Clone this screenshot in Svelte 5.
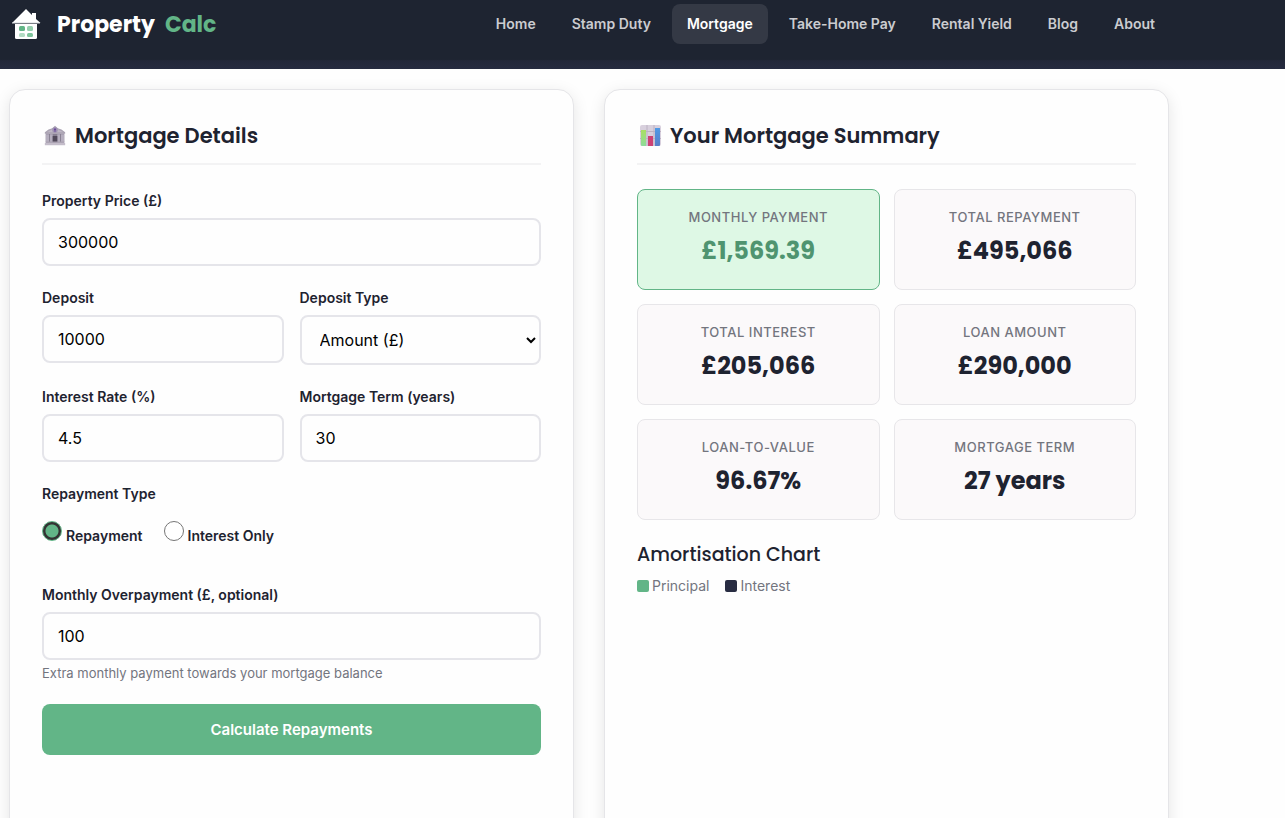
<script lang="ts">
  const links = ['Home', 'Stamp Duty', 'Mortgage', 'Take-Home Pay', 'Rental Yield', 'Blog', 'About'];
  const active = 'Mortgage';

  let price = $state('300000');
  let deposit = $state('10000');
  let depositType = $state('amount');
  let rate = $state('4.5');
  let term = $state('30');
  let repaymentType = $state('repayment');
  let overpayment = $state('100');

  const results = [
    { label: 'Monthly Payment', value: '£1,569.39', highlight: true },
    { label: 'Total Repayment', value: '£495,066' },
    { label: 'Total Interest', value: '£205,066' },
    { label: 'Loan Amount', value: '£290,000' },
    { label: 'Loan-to-Value', value: '96.67%' },
    { label: 'Mortgage Term', value: '27 years' },
  ];
</script>

<header class="header">
  <a class="logo" href="#home">
    <svg width="30" height="32" viewBox="0 0 30 32" aria-hidden="true">
      <path d="M1 15 L15 1 L21 7 V5 H25 V11 L29.500 15 Z" fill="#fff" />
      <path d="M4 16 H26 V29.500 Q26 31 24.500 31 H5.500 Q4 31 4 29.500 Z" fill="#fff" />
      <path d="M1 15 H29" stroke="#d5d8dc" stroke-width="1" />
      <rect x="8" y="18" width="6" height="5" rx="1.500" fill="#62b587" />
      <rect x="16" y="18" width="6" height="5" rx="1.500" fill="#95cfae" />
      <rect x="8" y="25" width="6" height="4" rx="1.500" fill="#b3dcc4" />
      <rect x="16" y="25" width="6" height="4" rx="1.500" fill="#7fc49c" />
    </svg>
    <span class="logo-text">Property</span>
    <span class="logo-text accent">Calc</span>
  </a>
  <nav class="nav">
    {#each links as link}
      <a href="#{link.toLowerCase().replace(' ', '-')}" class:active={link === active}>{link}</a>
    {/each}
  </nav>
</header>

<main class="page">
  <section class="card">
    <h2>
      <svg width="24" height="24" viewBox="-1 -1 26 26" aria-hidden="true">
        <path d="M1 8 L5 5 L9 3.500 L12 1 L15 3.500 L19 5 L23 8 V9.500 H1 Z" fill="#aaa3b2" />
        <path d="M3 8 L12 3 L21 8 Z" fill="#beb7c5" />
        <circle cx="12" cy="5.500" r="3" fill="#9e91b2" />
        <path d="M12 3.500 V7.500 M11 5 H13" stroke="#654099" stroke-width="1" />
        <rect x="2" y="9.500" width="20" height="9.500" fill="#877f91" />
        <path d="M2 10 H5.500 V19 H2 Z M6.500 10 H9.500 V19 H6.500 Z M14.500 10 H17.500 V19 H14.500 Z M18.500 10 H22 V19 H18.500 Z" fill="#b5aebe" />
        <rect x="9.500" y="12" width="5" height="7" fill="#51495a" />
        <rect x="2" y="18" width="20" height="1.500" fill="#aaa2b2" />
        <rect x="1" y="19.500" width="22" height="2.500" fill="#c4bdca" />
      </svg>
      Mortgage Details
    </h2>
    <form onsubmit={(e) => e.preventDefault()}>
      <div class="group">
        <label for="price">Property Price (£)</label>
        <input id="price" type="text" inputmode="numeric" bind:value={price} />
      </div>
      <div class="row">
        <div class="group">
          <label for="deposit">Deposit</label>
          <input id="deposit" type="text" inputmode="numeric" bind:value={deposit} />
        </div>
        <div class="group">
          <label for="depositType">Deposit Type</label>
          <select id="depositType" bind:value={depositType}>
            <option value="amount">Amount (£)</option>
            <option value="percent">Percentage (%)</option>
          </select>
        </div>
      </div>
      <div class="row">
        <div class="group">
          <label for="rate">Interest Rate (%)</label>
          <input id="rate" type="text" inputmode="decimal" bind:value={rate} />
        </div>
        <div class="group">
          <label for="term">Mortgage Term (years)</label>
          <input id="term" type="text" inputmode="numeric" bind:value={term} />
        </div>
      </div>
      <fieldset class="group">
        <legend>Repayment Type</legend>
        <div class="radios">
          <label class="radio">
            <input type="radio" name="repaymentType" value="repayment" bind:group={repaymentType} />
            <span>Repayment</span>
          </label>
          <label class="radio">
            <input type="radio" name="repaymentType" value="interest" bind:group={repaymentType} />
            <span>Interest Only</span>
          </label>
        </div>
      </fieldset>
      <div class="group">
        <label for="overpayment">Monthly Overpayment (£, optional)</label>
        <input id="overpayment" type="text" inputmode="numeric" bind:value={overpayment} />
        <small>Extra monthly payment towards your mortgage balance</small>
      </div>
      <button type="submit">Calculate Repayments</button>
    </form>
  </section>

  <section class="card">
    <h2>
      <svg width="24" height="24" viewBox="0 0 24 24" aria-hidden="true">
        <defs>
          <linearGradient id="bar-green" x2="0" y2="1"><stop stop-color="#a9df62" /><stop offset="1" stop-color="#8edb9c" /></linearGradient>
          <linearGradient id="bar-blue" x2="0" y2="1"><stop stop-color="#4f9ae6" /><stop offset="1" stop-color="#5a7ec8" /></linearGradient>
        </defs>
        <rect x="2" y="1" width="21" height="21" rx="2" fill="#d8d0dd" />
        <path d="M2 7.500 H23 M2 14.500 H23 M9 1 V22 M16 1 V22" stroke="#bcb2c3" stroke-width="1" />
        <path d="M3 6 H8 V22 H4 Q3 22 3 21 Z" fill="url(#bar-green)" />
        <rect x="10" y="12" width="5" height="10" fill="#cd4174" />
        <path d="M17 4 H22 V21 Q22 22 21 22 H17 Z" fill="url(#bar-blue)" />
      </svg>
      Your Mortgage Summary
    </h2>
    <div class="results">
      {#each results as r}
        <div class="result" class:highlight={r.highlight}>
          <div class="result-label">{r.label}</div>
          <div class="result-value">{r.value}</div>
        </div>
      {/each}
    </div>
    <h3>Amortisation Chart</h3>
    <div class="legend">
      <span><i class="principal"></i>Principal</span>
      <span><i class="interest"></i>Interest</span>
    </div>
    <div class="chart"></div>
  </section>
</main>

<style>
  :global(body) {
    background: #fefefe;
    color: #1e2330;
    font-family: Inter, "Liberation Sans", sans-serif;
  }
  .header {
    display: flex;
    justify-content: space-between;
    align-items: flex-start;
    padding: 4px 115px 25px 11px;
    background: linear-gradient(#1e2431 86%, #23283a 88%, #262b40);
  }
  .logo {
    display: flex;
    align-items: center;
    gap: 10px;
    height: 40px;
    text-decoration: none;
  }
  .logo svg { margin-right: 6px; }
  .logo-text {
    color: #fff;
    font-family: Poppins, Inter, sans-serif;
    font-size: 22px;
    font-weight: 700;
  }
  .logo-text.accent { color: #62b587; }
  .nav {
    display: flex;
    gap: 6px;
  }
  .nav a {
    padding: 0 15px;
    border-radius: 8px;
    color: #cbccd0;
    font-size: 14px;
    font-weight: 600;
    line-height: 40px;
    text-decoration: none;
    white-space: nowrap;
  }
  .nav a.active {
    background: #343945;
    color: #fff;
  }

  .page {
    display: grid;
    grid-template-columns: 1fr 1fr;
    gap: 30px;
    padding: 20px 116px 40px 9px;
  }
  .card {
    padding: 32px;
    border: 1px solid #e5e5e8;
    border-radius: 16px;
    background: #fefefe;
    box-shadow: 0 4px 16px rgba(0, 0, 0, 0.1);
  }
  h2, h3 {
    margin: 0;
    font-family: Poppins, Inter, sans-serif;
  }
  h2 {
    display: flex;
    align-items: center;
    gap: 8px;
    margin-bottom: 24px;
    padding-bottom: 13px;
    border-bottom: 2px solid #f3f3f4;
    font-size: 21px;
    font-weight: 600;
    line-height: 28px;
  }
  h2 svg { margin-left: 1px; }

  .group {
    margin: 0 0 20px;
    padding: 0;
    border: 0;
  }
  .row {
    display: grid;
    grid-template-columns: 1fr 1fr;
    gap: 16px;
  }
  label, legend {
    display: block;
    margin-bottom: 6px;
    padding: 0;
    font-size: 14px;
    font-weight: 600;
    line-height: 23px;
  }
  input[type='text'], select {
    display: block;
    box-sizing: border-box;
    width: 100%;
    height: 48px;
    padding: 0 14px;
    border: 2px solid #e5e5ea;
    border-radius: 8px;
    background: #fefefe;
    color: #000;
    font-family: inherit;
    font-size: 16px;
  }
  select {
    height: 50px;
    padding: 0 0 0 14px;
  }
  .radios {
    display: flex;
    gap: 21px;
    padding: 10px 0 16px;
  }
  .radio {
    display: flex;
    align-items: flex-start;
    gap: 4px;
    margin: 0;
  }
  .radio span { margin-top: 3px; }
  .radio input {
    appearance: none;
    width: 20px;
    height: 20px;
    margin: 0;
    border: 1px solid #767676;
    border-radius: 50%;
    background: #fff;
  }
  .radio input:checked {
    border-color: #62b587;
    background: radial-gradient(circle, #62b587 6px, #333 7px);
  }
  small {
    display: block;
    margin-top: 3px;
    color: #73757e;
    font-size: 13px;
    line-height: 21px;
  }
  button {
    display: block;
    width: 100%;
    height: 51px;
    border: 0;
    border-radius: 8px;
    background: #62b587;
    color: #fff;
    font-family: inherit;
    font-size: 15px;
    font-weight: 600;
    cursor: pointer;
  }

  .results {
    display: grid;
    grid-template-columns: 1fr 1fr;
    gap: 14px;
  }
  .result {
    padding: 16px;
    border: 1px solid #e7e6e9;
    border-radius: 8px;
    background: #fbf9fa;
    text-align: center;
  }
  .result-label {
    color: #73757e;
    font-size: 13px;
    font-weight: 500;
    letter-spacing: 0.04em;
    line-height: 23px;
    text-transform: uppercase;
  }
  .result-value {
    font-family: Poppins, Inter, sans-serif;
    font-size: 24px;
    font-weight: 700;
    line-height: 44px;
  }
  .highlight {
    border-color: #62b587;
    background: #def8e5;
  }
  .highlight .result-value { color: #4f9470; }

  h3 {
    margin-top: 22px;
    font-size: 19px;
    font-weight: 500;
    line-height: 26px;
  }
  .legend {
    display: flex;
    gap: 16px;
    margin-top: 7px;
    color: #73757e;
    font-size: 14px;
    line-height: 22px;
  }
  .legend span {
    display: flex;
    align-items: center;
    gap: 3px;
  }
  .legend i {
    width: 12px;
    height: 12px;
    border-radius: 2px;
  }
  .principal { background: #62b587; }
  .interest { background: #282c42; }
  .chart { min-height: 260px; }
</style>
